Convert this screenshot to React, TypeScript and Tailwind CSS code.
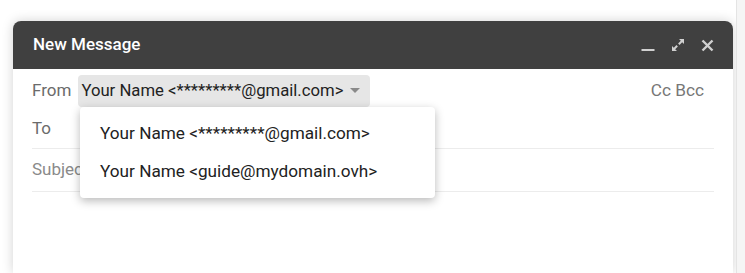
import React from "react";

const font = { fontFamily: "Roboto, 'Liberation Sans', Arial, sans-serif" };

function MinimizeIcon() {
  return (
    <svg width="14" height="14" viewBox="0 0 14 14" className="text-[#d0d0d0]">
      <rect x="0.5" y="11" width="13" height="2" fill="currentColor" />
    </svg>
  );
}

function ExpandIcon() {
  return (
    <svg width="14" height="14" viewBox="0 0 14 14" className="text-[#d0d0d0]">
      <path d="M8 1h5v5l-1.8-1.8-2.7 2.7-1.4-1.4 2.7-2.7z" fill="currentColor" />
      <path d="M6 13H1V8l1.8 1.8 2.7-2.7 1.4 1.4-2.7 2.7z" fill="currentColor" />
    </svg>
  );
}

function CloseIcon() {
  return (
    <svg width="13" height="13" viewBox="0 0 13 13" className="text-[#d0d0d0]">
      <path d="M1.5 1.5l10 10M11.5 1.5l-10 10" stroke="currentColor" strokeWidth="2.4" />
    </svg>
  );
}

export default function App() {
  const senders = [
    "Your Name <*********@gmail.com>",
    "Your Name <guide@mydomain.ovh>",
  ];

  return (
    <div className="flex h-[273px] w-[745px] overflow-hidden bg-white" style={font}>
      <div className="flex-1 pl-[13px] pt-[21px] pr-[3px]">
        <div className="h-full rounded-t-lg bg-white shadow-[0_0_12px_rgba(0,0,0,0.18)]">
          <div className="flex h-[48px] items-center justify-between rounded-t-lg bg-[#404040] pl-[20px] pr-[19px]">
            <span className="text-[17px] font-medium text-white">New Message</span>
            <div className="flex items-center gap-[16px]">
              <MinimizeIcon />
              <ExpandIcon />
              <CloseIcon />
            </div>
          </div>

          <div className="px-[19px]">
            <div className="relative flex h-[40px] items-center pt-[4px]">
              <span className="mr-[7px] text-[17px] text-[#6b6b6b]">From</span>
              <button className="flex h-[32px] w-[292px] items-center justify-between rounded bg-[#e6e6e6] pl-[3px] pr-[10px] text-[16.7px] text-[#222]">
                <span>{senders[0]}</span>
                <svg width="10" height="6" viewBox="0 0 10 6">
                  <path d="M0 0h10L5 5z" fill="#8a8a8a" />
                </svg>
              </button>
              <span className="ml-auto mr-[10px] text-[17.2px] text-[#777]">Cc Bcc</span>

              <div className="absolute left-[48px] top-[38px] z-10 w-[355px] rounded bg-white pt-[8px] pb-[7px] shadow-[0_3px_10px_rgba(0,0,0,0.28)]">
                {senders.map((s) => (
                  <div key={s} className="flex h-[38px] items-center pl-[20px] text-[17.2px] text-[#222]">
                    {s}
                  </div>
                ))}
              </div>
            </div>

            <div className="flex h-[40px] items-center border-b border-[#ececec] text-[17px] text-[#6b6b6b]">
              To
            </div>
            <div className="flex h-[43px] items-center border-b border-[#ececec] text-[17px] text-[#8a8a8a]">
              Subject
            </div>
          </div>
        </div>
      </div>
      <div className="w-[9px] border-l border-[#e4e4e4] bg-[#f5f5f5]" />
    </div>
  );
}
